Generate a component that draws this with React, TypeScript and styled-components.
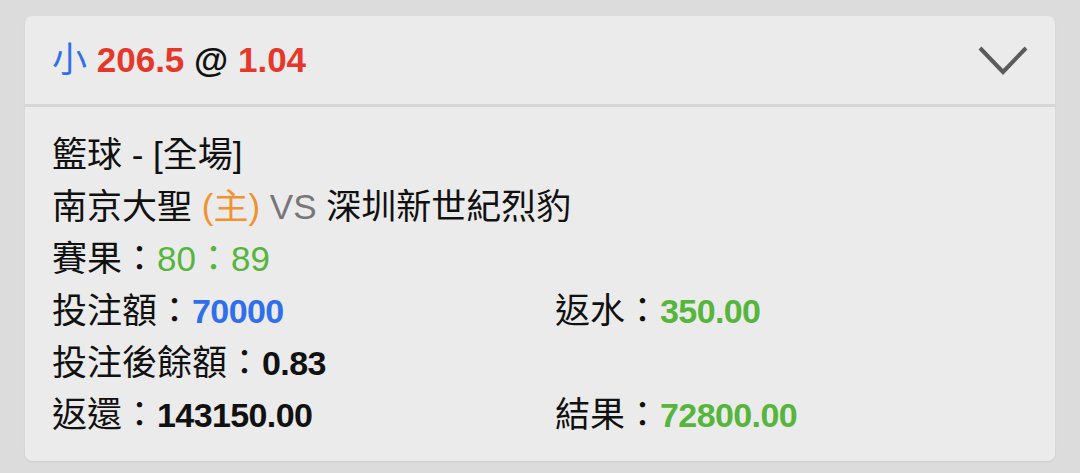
import React from "react";
import styled, { createGlobalStyle } from "styled-components";

const GlobalStyle = createGlobalStyle`
  html, body {
    margin: 0;
    padding: 0;
    background: #dcdcdc;
  }
  body {
    font-family: "Liberation Sans", "Noto Sans CJK TC", sans-serif;
    color: #111;
  }
`;

type Tone = "blue" | "red" | "green" | "orange" | "gray" | "black";

const toneColor: Record<Tone, string> = {
  blue: "#2f6fea",
  red: "#e5382a",
  green: "#56b53b",
  orange: "#f0922f",
  gray: "#777777",
  black: "#111111",
};

interface Field {
  label: string;
  value: string;
  tone: Tone;
}

const rows: Field[][] = [
  [
    { label: "投注額：", value: "70000", tone: "blue" },
    { label: "返水：", value: "350.00", tone: "green" },
  ],
  [{ label: "投注後餘額：", value: "0.83", tone: "black" }],
  [
    { label: "返還：", value: "143150.00", tone: "black" },
    { label: "結果：", value: "72800.00", tone: "green" },
  ],
];

const App: React.FC = () => {
  return (
    <Page>
      <GlobalStyle />
      <Card>
        <Header>
          <Title>
            <Tinted tone="blue">小</Tinted> <Strong tone="red">206.5</Strong>{" "}
            <Strong tone="black">@</Strong> <Strong tone="red">1.04</Strong>
          </Title>
          <Chevron width="52" height="32" viewBox="0 0 52 32">
            <polyline
              points="3,3 26,27 49,3"
              fill="none"
              stroke="#5b5b5b"
              strokeWidth="4"
            />
          </Chevron>
        </Header>
        <Body>
          <Line>籃球 - [全場]</Line>
          <Line>
            南京大聖 <Tinted tone="orange">(主)</Tinted>{" "}
            <Tinted tone="gray">VS</Tinted> 深圳新世紀烈豹
          </Line>
          <Line>
            賽果：<Tinted tone="green">80：89</Tinted>
          </Line>
          {rows.map((row, i) => (
            <Grid key={i}>
              {row.map((f) => (
                <Line key={f.label}>
                  {f.label}
                  <Value tone={f.tone}>{f.value}</Value>
                </Line>
              ))}
            </Grid>
          ))}
        </Body>
      </Card>
    </Page>
  );
};

const Page = styled.div`
  width: 1080px;
  height: 473px;
  padding: 16px 25px 0;
  box-sizing: border-box;
  background: #dcdcdc;
`;

const Card = styled.div`
  width: 1030px;
  background: #ebebeb;
  border-radius: 7px;
  box-shadow: 0 1px 2px rgba(0, 0, 0, 0.08);
  overflow: hidden;
`;

const Header = styled.div`
  height: 88px;
  display: flex;
  align-items: center;
  justify-content: space-between;
  padding: 0 26px 0 27px;
  border-bottom: 3px solid #d5d5d5;
`;

const Title = styled.div`
  font-size: 35px;
  line-height: 40px;
  white-space: pre;
`;

const Chevron = styled.svg`
  display: block;
  margin-top: 2px;
`;

const Body = styled.div`
  padding: 22px 27px 20px;
  font-size: 35px;
  line-height: 52px;
`;

const Grid = styled.div`
  display: grid;
  grid-template-columns: 503px 1fr;
`;

const Line = styled.div`
  height: 52px;
  white-space: pre;
`;

const Tinted = styled.span<{ tone: Tone }>`
  color: ${(p) => toneColor[p.tone]};
`;

const Strong = styled(Tinted)`
  font-weight: bold;
`;

const Value = styled(Tinted)`
  font-weight: bold;
  font-size: 34px;
  letter-spacing: -0.6px;
`;

export default App;
